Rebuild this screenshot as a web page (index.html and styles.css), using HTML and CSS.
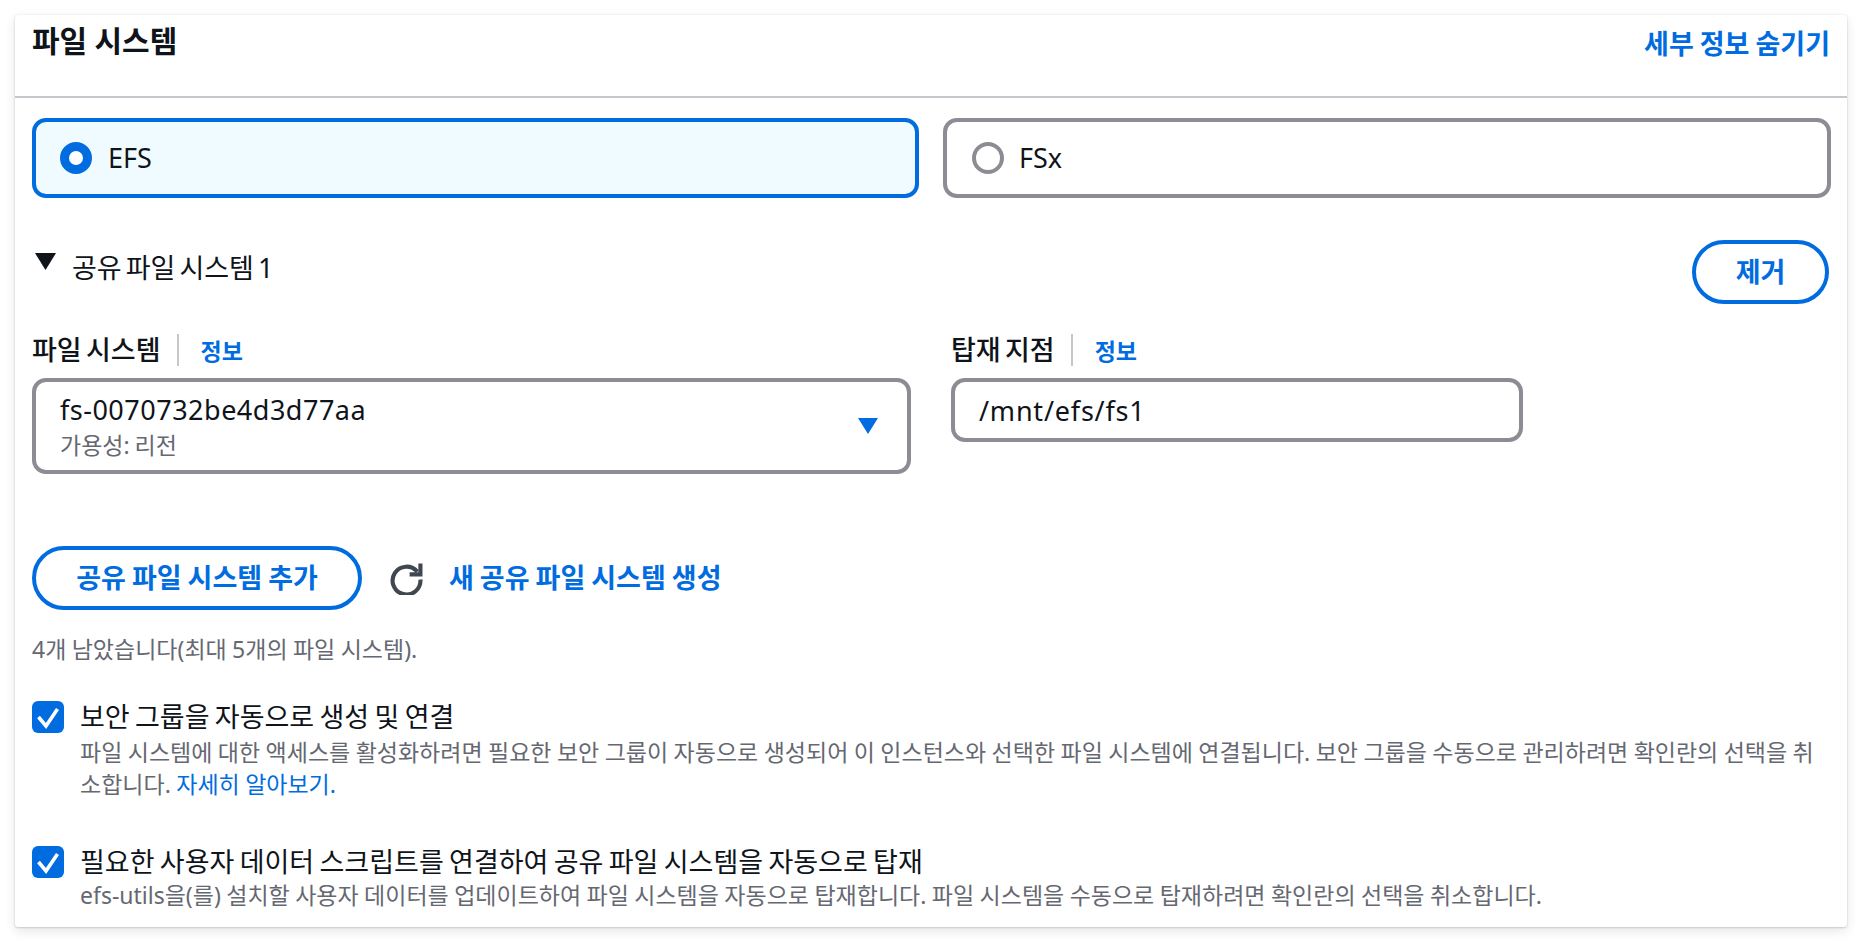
FILE: index.html
```html
<!DOCTYPE html>
<html lang="ko">
<head>
<meta charset="utf-8">
<title>파일 시스템</title>
<link rel="stylesheet" href="styles.css">
</head>
<body>
<section class="card">
  <header class="card-head">
    <h2 class="card-title">파일 시스템</h2>
    <a class="link link-strong head-link">세부 정보 숨기기</a>
  </header>
  <div class="card-body">
    <div class="tiles">
      <div class="tile tile-on"><span class="radio radio-on"></span><span>EFS</span></div>
      <div class="tile tile-off"><span class="radio"></span><span>FSx</span></div>
    </div>
    <div class="share-head">
      <div class="share-title">
        <svg class="caret" viewBox="0 0 20 16"><path d="M0 0h20L10 16z"/></svg>
        <span>공유 파일 시스템 1</span>
      </div>
      <button class="btn btn-remove">제거</button>
    </div>
    <div class="fields">
      <div class="field field-fs">
        <div class="field-label"><span class="label-text">파일 시스템</span><a class="link info">정보</a></div>
        <div class="select">
          <div>
            <div class="select-value">fs-0070732be4d3d77aa</div>
            <div class="select-sub">가용성: 리전</div>
          </div>
          <svg class="select-caret" viewBox="0 0 20 16"><path d="M0 0h20L10 16z"/></svg>
        </div>
      </div>
      <div class="field field-mount">
        <div class="field-label"><span class="label-text">탑재 지점</span><a class="link info">정보</a></div>
        <div class="input">/mnt/efs/fs1</div>
      </div>
    </div>
    <div class="actions">
      <button class="btn btn-add">공유 파일 시스템 추가</button>
      <svg class="refresh" viewBox="0 0 32 32"><path d="M26.5 9.5A13.5 13.5 0 1 0 29.5 17" fill="none" stroke="#414750" stroke-width="4"/><path d="M29.5 1.5v10.5H19" fill="none" stroke="#414750" stroke-width="4"/></svg>
      <a class="link link-strong action-link">새 공유 파일 시스템 생성</a>
    </div>
    <p class="hint">4개 남았습니다(최대 5개의 파일 시스템).</p>
    <div class="check check-one">
      <span class="box"><svg viewBox="0 0 32 32"><path d="M6.5 16l7.5 9 11.5-17" fill="none" stroke="#fff" stroke-width="3.6"/></svg></span>
      <div class="check-text">
        <div class="check-label">보안 그룹을 자동으로 생성 및 연결</div>
        <div class="check-desc">파일 시스템에 대한 액세스를 활성화하려면 필요한 보안 그룹이 자동으로 생성되어 이 인스턴스와 선택한 파일 시스템에 연결됩니다. 보안 그룹을 수동으로 관리하려면 확인란의 선택을 취소합니다. <a class="link">자세히 알아보기.</a></div>
      </div>
    </div>
    <div class="check check-two">
      <span class="box"><svg viewBox="0 0 32 32"><path d="M6.5 16l7.5 9 11.5-17" fill="none" stroke="#fff" stroke-width="3.6"/></svg></span>
      <div class="check-text">
        <div class="check-label">필요한 사용자 데이터 스크립트를 연결하여 공유 파일 시스템을 자동으로 탑재</div>
        <div class="check-desc">efs-utils을(를) 설치할 사용자 데이터를 업데이트하여 파일 시스템을 자동으로 탑재합니다. 파일 시스템을 수동으로 탑재하려면 확인란의 선택을 취소합니다.</div>
      </div>
    </div>
  </div>
</section>
</body>
</html>
```

FILE: styles.css
```css
* { box-sizing: border-box; }
html, body { margin: 0; padding: 0; background: #fff; }
body {
  width: 1862px;
  height: 942px;
  padding: 15px;
  overflow: hidden;
  font-family: "Noto Sans", "Noto Sans CJK KR", sans-serif;
  color: #0f141a;
  font-size: 27px;
}
.card {
  width: 1832px;
  height: 912px;
  background: #fff;
  border-radius: 3px;
  box-shadow: 0 1px 2px rgba(0,7,22,.12), 0 4px 12px rgba(0,7,22,.1), 0 0 2px rgba(0,7,22,.1);
}
.card-head {
  height: 83px;
  padding: 0 17px 0 17px;
  display: flex;
  justify-content: space-between;
  align-items: flex-start;
  border-bottom: 2px solid #c6c6cd;
}
.card-title { margin: 6px 0 0; font-size: 30px; line-height: 40px; font-weight: 700; word-spacing: -.5px; }
.head-link { margin-top: 9px; line-height: 40px; }
.link { color: #006ce0; text-decoration: none; }
.link-strong { font-weight: 700; font-size: 27px; word-spacing: -1px; }
.action-link { margin-top: -4px; }
.card-body { padding: 20px 16px 0 17px; }
.tiles { display: grid; grid-template-columns: 887px 888px; gap: 24px; }
.tile {
  height: 80px;
  border: 4px solid #8c8c94;
  border-radius: 14px;
  padding-left: 24px;
  display: flex;
  align-items: center;
  gap: 16px;
  line-height: 36px;
}
.tile-off { padding-left: 25px; gap: 15px; }
.tile-on { border-color: #006ce0; background: #f0fbff; }
.radio { width: 32px; height: 32px; border-radius: 50%; border: 4px solid #8c8c94; background: #fff; }
.radio-on { border: 9px solid #006ce0; }
.share-head { display: flex; justify-content: space-between; margin-top: 42px; padding-right: 2px; }
.share-title { display: flex; align-items: flex-start; height: 63px; }
.caret { width: 21px; height: 17px; margin: 13px 16px 0 3px; fill: #0f141a; }
.share-title span { line-height: 36px; margin-top: 10px; word-spacing: -3px; }
.btn {
  font-family: inherit;
  font-size: 27px;
  font-weight: 700;
  word-spacing: -1px;
  color: #006ce0;
  background: #fff;
  border: 4px solid #006ce0;
  border-radius: 32px;
  height: 64px;
  padding: 0 0 4px;
}
.btn-remove { width: 137px; }
.btn-add { width: 330px; }
.fields { display: flex; gap: 40px; margin-top: 12px; }
.field-fs { width: 879px; }
.field-mount { width: 572px; }
.field-label { display: flex; align-items: center; height: 32px; margin-top: 18px; }
.label-text { font-weight: 500; font-size: 27px; padding-right: 16px; border-right: 2px solid #c6c6cd; line-height: 32px; word-spacing: -2.7px; }
.info { font-size: 23px; font-weight: 700; margin-left: 22px; }
.select, .input { border: 4px solid #8c8c94; border-radius: 14px; margin-top: 12px; background: #fff; }
.select { height: 96px; padding: 10px 29px 0 24px; display: flex; justify-content: space-between; }
.select-value { line-height: 36px; letter-spacing: .5px; }
.select-sub { font-size: 23px; line-height: 34px; color: #656871; margin-top: 0; word-spacing: -1px; }
.select-caret { width: 20px; height: 16px; fill: #006ce0; margin: 26px 0 0; }
.input { height: 64px; padding: 0 24px; line-height: 58px; letter-spacing: .8px; }
.actions { display: flex; align-items: center; margin-top: 72px; }
.refresh { width: 33px; height: 33px; margin: 0 26px 0 28px; }
.hint { margin: 23px 0 0; font-size: 23px; line-height: 32px; color: #656871; word-spacing: -.6px; }
.check { display: flex; gap: 16px; }
.check-one { margin-top: 36px; }
.check-two { margin-top: 46px; }
.box { width: 32px; height: 32px; background: #006ce0; border-radius: 6px; flex: none; }
.box svg { display: block; width: 32px; height: 32px; }
.check-label { line-height: 32px; word-spacing: -1.7px; }
.check-desc { font-size: 23px; line-height: 32px; color: #656871; margin-top: 3px; word-break: break-all; word-spacing: -.55px; }
.check-two .check-desc { margin-top: 1px; }
```
